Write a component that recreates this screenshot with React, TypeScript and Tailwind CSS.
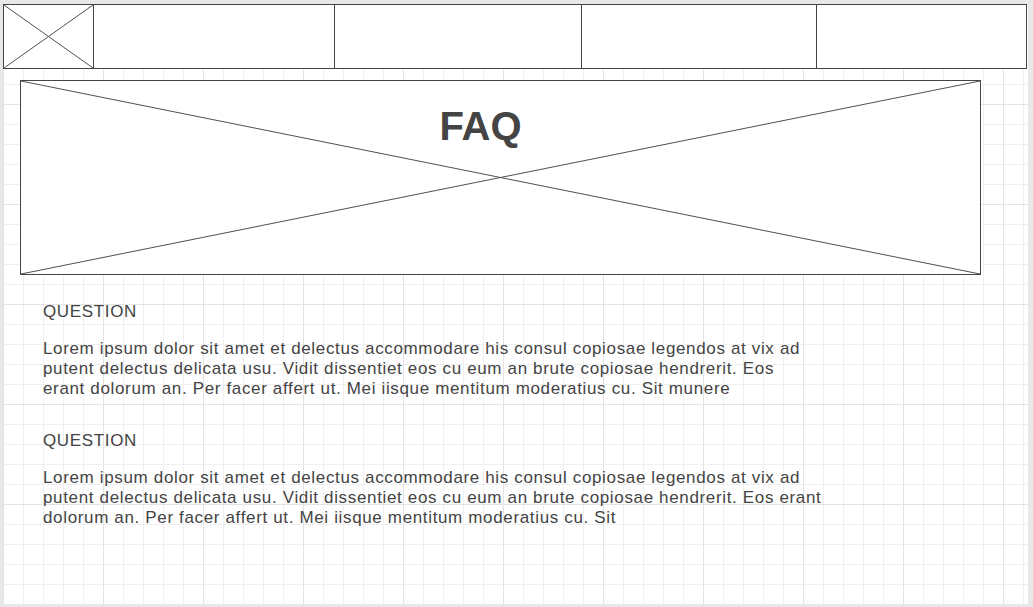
import React from "react";

function Cross({ className }: { className?: string }) {
  return (
    <svg className={className} width="100%" height="100%" preserveAspectRatio="none">
      <line x1="0" y1="0" x2="100%" y2="100%" stroke="#505050" strokeWidth="1" />
      <line x1="100%" y1="0" x2="0" y2="100%" stroke="#505050" strokeWidth="1" />
    </svg>
  );
}

const lorem1 =
  "Lorem ipsum dolor sit amet et delectus accommodare his consul copiosae legendos at vix ad putent delectus delicata usu. Vidit dissentiet eos cu eum an brute copiosae hendrerit. Eos erant dolorum an. Per facer affert ut. Mei iisque mentitum moderatius cu. Sit munere";
const lorem2 =
  "Lorem ipsum dolor sit amet et delectus accommodare his consul copiosae legendos at vix ad putent delectus delicata usu. Vidit dissentiet eos cu eum an brute copiosae hendrerit. Eos erant dolorum an. Per facer affert ut. Mei iisque mentitum moderatius cu. Sit";

export default function App() {
  return (
    <div className="w-[1033px] h-[607px] bg-[#e8e8e8] pt-[4px] pl-[3px] overflow-hidden font-['Liberation_Sans',Arial,sans-serif] text-[#444444]">
      <div className="w-[1025px] h-[600px] bg-white bg-[image:linear-gradient(to_right,#e3e3e3_1px,transparent_1px),linear-gradient(to_bottom,#e3e3e3_1px,transparent_1px),linear-gradient(to_right,#f0f0f0_1px,transparent_1px),linear-gradient(to_bottom,#f0f0f0_1px,transparent_1px)] bg-[length:100px_100px,100px_100px,20px_20px,20px_20px]">
        {/* top nav */}
        <div className="flex w-[1024px] h-[65px] border border-[#444444] bg-white">
          <div className="w-[90px] border-r border-[#444444]">
            <Cross />
          </div>
          <div className="w-[241px] border-r border-[#444444]" />
          <div className="w-[247px] border-r border-[#444444]" />
          <div className="w-[235px] border-r border-[#444444]" />
          <div className="flex-1" />
        </div>

        {/* banner */}
        <div className="relative ml-[17px] mt-[11px] w-[961px] h-[195px] border border-[#444444] bg-white">
          <Cross className="absolute inset-0" />
          <div className="relative flex justify-center pr-[40px] pt-[15px]">
            <h1 className="text-[40px] font-bold">FAQ</h1>
          </div>
        </div>

        {/* questions */}
        <div className="ml-[40px] text-[17px] leading-[20px] tracking-[0.65px]">
          <div className="mt-[27px]">QUESTION</div>
          <p className="mt-[17px] w-[765px]">{lorem1}</p>
          <div className="mt-[32px]">QUESTION</div>
          <p className="mt-[17px] w-[790px]">{lorem2}</p>
        </div>
      </div>
    </div>
  );
}
